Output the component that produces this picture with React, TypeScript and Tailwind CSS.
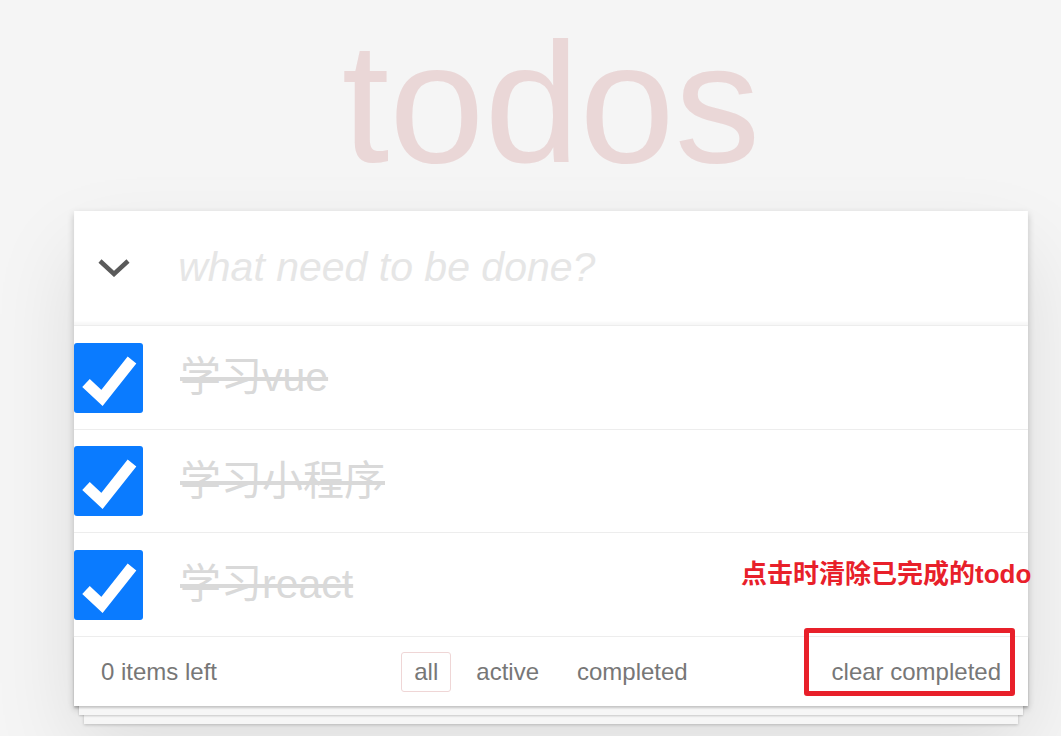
const todos = [
  { id: 1, title: '学习vue' },
  { id: 2, title: '学习小程序' },
  { id: 3, title: '学习react' },
]

const filters = ['all', 'active', 'completed']

function CheckBox() {
  return (
    <span className="flex h-[70px] w-[69px] shrink-0 items-center justify-center rounded-[3px] bg-[#0a7bff]">
      <svg width="69" height="70" viewBox="0 0 69 70">
        <polyline
          points="12,40 28,55 58,17"
          fill="none"
          stroke="#ffffff"
          strokeWidth="11"
          strokeLinejoin="miter"
        />
      </svg>
    </span>
  )
}

export default function App() {
  return (
    <div className="min-h-screen bg-[#f5f5f5] font-['Liberation_Sans','Noto_Sans_CJK_SC',sans-serif]">
      <div className="ml-[74px] w-[954px]">
        <h1 className="pt-[17px] text-center text-[171px] leading-[171px] font-normal text-[#ead7d7] mb-[23px]">
          todos
        </h1>

        <section className="relative bg-white shadow-[0_3px_7px_rgba(0,0,0,0.2),0_40px_80px_rgba(0,0,0,0.1)]">
          <header className="flex h-[114px] items-center shadow-[inset_0_-3px_2px_rgba(0,0,0,0.03)]">
            <div className="flex w-[114px] items-center pl-[24px]">
              <svg width="32" height="18" viewBox="0 0 32 18">
                <polyline points="2,2 16,15 30,2" fill="none" stroke="#5a5a5a" strokeWidth="4.5" />
              </svg>
            </div>
            <input
              className="w-full bg-transparent text-[41px] italic text-[#4d4d4d] outline-none placeholder:text-[#e6e6e6] placeholder:italic"
              placeholder="what need to be done?"
            />
          </header>

          <ul>
            {todos.map((todo, i) => (
              <li
                key={todo.id}
                className={`flex items-center border-t border-[#ededed] ${i === 1 ? 'h-[103px]' : 'h-[104px]'}`}
              >
                <CheckBox />
                <span className="ml-[37px] text-[41px] leading-none text-[#d9d9d9] line-through">
                  {todo.title}
                </span>
              </li>
            ))}
          </ul>

          <footer className="grid h-[70px] grid-cols-[1fr_auto_1fr] items-center border-t border-[#ededed] px-[27px] text-[24px] text-[#777777] shadow-[0_2px_2px_rgba(0,0,0,0.2),0_14px_0_-5px_#f6f6f6,0_15px_2px_-5px_rgba(0,0,0,0.2),0_28px_0_-10px_#f6f6f6,0_29px_3px_-10px_rgba(0,0,0,0.2)]">
            <span className="justify-self-start">0 items left</span>
            <ul className="flex items-center gap-[12px]">
              {filters.map(f => (
                <li
                  key={f}
                  className={`rounded-[3px] border px-[12px] py-[5px] leading-[28px] ${
                    f === 'all' ? 'border-[#efd6d6]' : 'border-transparent'
                  }`}
                >
                  {f}
                </li>
              ))}
            </ul>
            <button className="justify-self-end text-[24px] text-[#777777]">clear completed</button>
          </footer>

          <p className="absolute left-[667px] top-[350px] whitespace-nowrap text-[26px] font-bold leading-[26px] text-[#e8202a]">
            点击时清除已完成的todo
          </p>
          <div className="absolute left-[730px] top-[417px] h-[68px] w-[211px] rounded-[3px] border-[5px] border-[#e8202a]" />
        </section>
      </div>
    </div>
  )
}
